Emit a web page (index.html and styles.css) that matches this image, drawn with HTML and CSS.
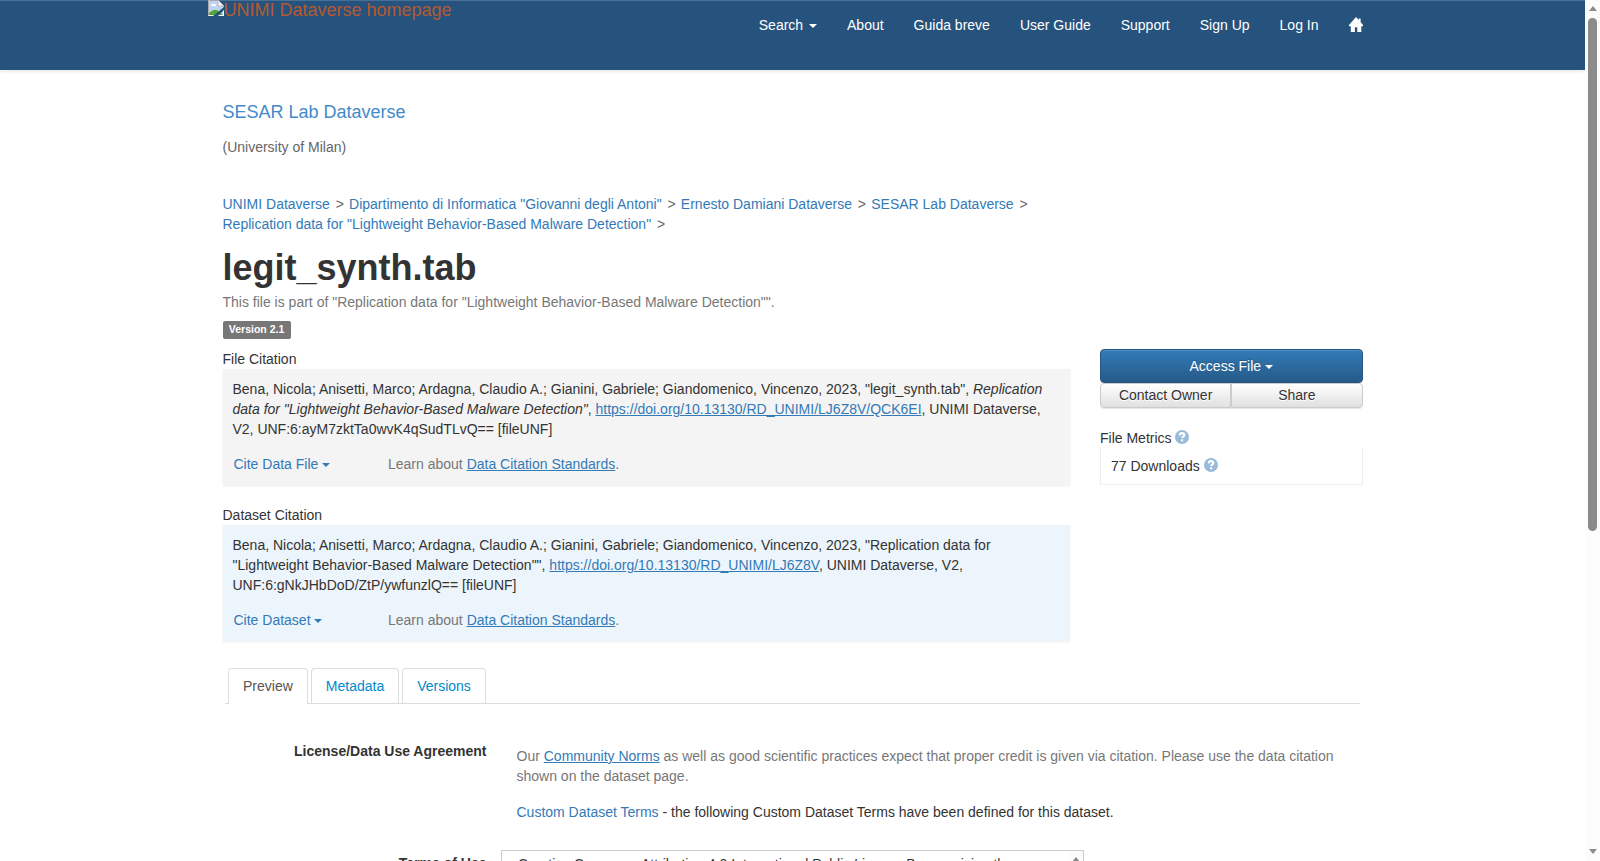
FILE: index.html
```
<!DOCTYPE html>
<html lang="en">
<head>
  <meta charset="UTF-8">
  <title>legit_synth.tab - UNIMI Dataverse</title>
  <link rel="stylesheet" href="styles.css">
</head>
<body>
<div class="page">
  <!-- Navbar -->
  <nav class="navbar">
    <div class="container navbar-inner">
      <a class="brand"><svg width="16" height="16" viewBox="0 0 16 16"><path d="M0 0h10l6 6v10H0z" fill="#fff"/><path d="M1 1h9v5h5v9H1z" fill="#c1d3f5"/><path d="M3 6a2 2 0 0 1 2-2 2 2 0 0 1 3 2z" fill="#fff"/><path d="M1 15v-2q4-4 8-3l6 5z" fill="#53a737"/><path d="M.5 15.5V.5H10l5.500 5.500v3" fill="none" stroke="#aaa"/><path d="M10 0v6h6z" fill="#f5f5f5" stroke="#aaa" stroke-width=".7"/><path d="M5 16L16 7v3l-6 6z" fill="#26527e"/></svg><span>UNIMI Dataverse homepage</span></a>
      <ul class="nav">
        <li><a>Search <b class="caret"></b></a></li>
        <li><a>About</a></li>
        <li><a>Guida breve</a></li>
        <li><a>User Guide</a></li>
        <li><a>Support</a></li>
        <li><a>Sign Up</a></li>
        <li><a>Log In</a></li>
        <li><a class="home"><svg width="14" height="15" viewBox="0 0 14 15"><path d="M7 0l2.800 3V1.600h1.800V5L14 8v1.200h-1.700V15H8.300v-4.800H5.900V15H1.800V9.200H0V8z" fill="#fff"/></svg></a></li>
      </ul>
    </div>
  </nav>

  <div class="container content">
    <div class="dataverse-name"><a>SESAR Lab Dataverse</a></div>
    <div class="affiliation">(University of Milan)</div>

    <!-- Breadcrumbs -->
    <div class="breadcrumbs">
      <a>UNIMI Dataverse</a><i>&gt;</i><a>Dipartimento di Informatica "Giovanni degli Antoni"</a><i>&gt;</i><a>Ernesto Damiani Dataverse</a><i>&gt;</i><a>SESAR Lab Dataverse</a><i>&gt;</i><br>
      <a>Replication data for "Lightweight Behavior-Based Malware Detection"</a><i>&gt;</i>
    </div>

    <h1>legit_synth.tab</h1>
    <div class="text-muted">This file is part of "Replication data for "Lightweight Behavior-Based Malware Detection"".</div>
    <div class="label-row"><span class="label">Version 2.1</span></div>

    <div class="row">
      <!-- Citations -->
      <div class="citations">
        <div>File Citation</div>
        <div class="citation file">
          <div>Bena, Nicola; Anisetti, Marco; Ardagna, Claudio A.; Gianini, Gabriele; Giandomenico, Vincenzo, 2023, "legit_synth.tab", <em>Replication data for "Lightweight Behavior-Based Malware Detection"</em>, <a class="underline">https://doi.org/10.13130/RD_UNIMI/LJ6Z8V/QCK6EI</a>, UNIMI Dataverse, V2, UNF:6:ayM7zktTa0wvK4qSudTLvQ== [fileUNF]</div>
          <div class="citation-actions">
            <a class="cite">Cite Data File <b class="caret"></b></a>
            <span class="text-muted">Learn about <a class="underline">Data Citation Standards</a>.</span>
          </div>
        </div>
        <div>Dataset Citation</div>
        <div class="citation dataset">
          <div>Bena, Nicola; Anisetti, Marco; Ardagna, Claudio A.; Gianini, Gabriele; Giandomenico, Vincenzo, 2023, "Replication data for "Lightweight Behavior-Based Malware Detection"", <a class="underline">https://doi.org/10.13130/RD_UNIMI/LJ6Z8V</a>, UNIMI Dataverse, V2, UNF:6:gNkJHbDoD/ZtP/ywfunzlQ== [fileUNF]</div>
          <div class="citation-actions">
            <a class="cite">Cite Dataset <b class="caret"></b></a>
            <span class="text-muted">Learn about <a class="underline">Data Citation Standards</a>.</span>
          </div>
        </div>
      </div>

      <!-- Access and metrics -->
      <div class="actions">
        <div class="btn-access">Access File <b class="caret"></b></div>
        <div class="btn-group"><div class="btn">Contact Owner</div><div class="btn">Share</div></div>
        <div class="metrics-title">File Metrics <span class="help"><svg width="14" height="14" viewBox="0 0 14 14"><circle cx="7" cy="7" r="7"/><path d="M4.700 5.400Q4.800 3.200 7 3.200t2.300 1.900q0 1-1.100 1.600-1 .5-1 1.300"/><path d="M7.100 9.300v2"/></svg></span></div>
        <div class="metrics-body">77 Downloads <span class="help"><svg width="14" height="14" viewBox="0 0 14 14"><circle cx="7" cy="7" r="7"/><path d="M4.700 5.400Q4.800 3.200 7 3.200t2.300 1.900q0 1-1.100 1.600-1 .5-1 1.300"/><path d="M7.100 9.300v2"/></svg></span></div>
      </div>
    </div>

    <!-- Tabs -->
    <div class="tabs">
      <div class="tab active">Preview</div>
      <div class="tab">Metadata</div>
      <div class="tab">Versions</div>
    </div>

    <!-- Terms -->
    <div class="form-row">
      <div class="form-label">License/Data Use Agreement</div>
      <div class="form-value">
        <p class="text-muted">Our <a class="underline">Community Norms</a> as well as good scientific practices expect that proper credit is given via citation. Please use the data citation shown on the dataset page.</p>
        <p><a>Custom Dataset Terms</a> - the following Custom Dataset Terms have been defined for this dataset.</p>
      </div>
    </div>
    <div class="form-row">
      <div class="form-label terms-label">Terms of Use</div>
      <div class="terms-box">
        <div class="terms-text">Creative Commons Attribution 4.0 International Public License By exercising the</div>
        <div class="scrollbar"><span class="arrow-up"></span></div>
      </div>
    </div>
  </div>
</div>
<div class="scrollbar">
  <span class="arrow-up"></span>
  <span class="thumb"></span>
  <span class="arrow-down"></span>
</div>
</body>
</html>
```
FILE: styles.css
```
* {
    box-sizing: border-box;
}
body {
    margin: 0;
    display: flex;
    height: 861px;
    overflow: hidden;
    font-family: "Liberation Sans", Arial, sans-serif;
    font-size: 14px;
    line-height: 20px;
    color: #333;
    background: #fff;
}
a {
    color: #337ab7;
}
.underline {
    text-decoration: underline;
}
.text-muted {
    color: #777;
}
.page {
    flex: 1;
    height: 861px;
    overflow: hidden;
}
.container {
    width: 1170px;
    margin: 0 auto;
}
.caret {
    display: inline-block;
    vertical-align: middle;
    border-top: 4px solid;
    border-left: 4px solid transparent;
    border-right: 4px solid transparent;
}

/* navbar */
.navbar {
    height: 70px;
    background: #26527e;
    border-top: 1px solid #4a6f94;
    box-shadow: 0 1px 4px rgba(0,0,0,0.12);
}
.navbar-inner {
    display: flex;
    justify-content: space-between;
}
.brand {
    display: flex;
    height: 20px;
    margin-top: -1px;
    font-size: 18px;
    color: #c55b28;
}
.brand span {
    opacity: 0.9;
}
.nav {
    display: flex;
    margin: 0;
    padding: 0;
    list-style: none;
}
.nav a {
    display: block;
    padding: 14px 15px;
    color: #fff;
}
.nav .caret {
    margin-left: 2px;
}
.nav .home svg {
    display: block;
    margin-top: 2px;
}

/* header */
.content {
    padding: 32px 15px 0;
}
.dataverse-name {
    font-size: 18px;
}
.dataverse-name a {
    color: #428bca;
}
.affiliation {
    margin-top: 15px;
    color: #666;
}
.breadcrumbs {
    margin-top: 37px;
}
.breadcrumbs i {
    margin: 0 5.2px 0 5.8px;
    font-style: normal;
    color: #666;
}
h1 {
    margin: 14px 0 4px;
    font-size: 36px;
    line-height: 40px;
}
.label-row {
    display: flex;
    margin: 9px 0 10px;
}
.label {
    height: 18px;
    padding: 0 6.3px;
    border-radius: 2px;
    background: #777;
    color: #fff;
    font-size: 10.5px;
    font-weight: bold;
    line-height: 17px;
}

/* citations */
.row {
    display: flex;
    gap: 30px;
}
.citations {
    width: 847.5px;
}
.citation {
    height: 116px;
    margin-bottom: 20px;
    padding: 10px;
    box-shadow: 0 1px 2px rgba(0,0,0,0.08);
}
.citation.file {
    background: #f4f4f4;
}
.citation.dataset {
    background: #ecf5fc;
}
.citation-actions {
    display: flex;
    margin-top: 15px;
}
.cite {
    width: 155.5px;
    padding-left: 1px;
}

/* right column */
.actions {
    flex: 1;
}
.btn-access {
    height: 34px;
    padding: 6px 0;
    border: 1px solid #245580;
    border-radius: 4px;
    background: linear-gradient(#337ab7, #265a88);
    box-shadow: inset 0 1px 0 rgba(255,255,255,0.15), 0 1px 1px rgba(0,0,0,0.08);
    color: #fff;
    text-align: center;
    text-shadow: 0 -1px 0 rgba(0,0,0,0.2);
}
.btn-group {
    display: flex;
    margin-bottom: 20px;
}
.btn {
    flex: 1;
    height: 25px;
    padding-top: 1px;
    border: 1px solid #ccc;
    border-radius: 4px 0 0 4px;
    background: linear-gradient(#fff, #e0e0e0);
    box-shadow: 0 1px 1px rgba(0,0,0,0.1);
    text-align: center;
    text-shadow: 0 1px 0 #fff;
}
.btn + .btn {
    border-radius: 0 4px 4px 0;
}
.metrics-body {
    height: 37px;
    padding: 8px 10px;
    border: 1px solid #eee;
    border-top: 0;
}
.help svg {
    vertical-align: -1px;
    opacity: 0.5;
}
.help circle {
    fill: #337ab7;
}
.help path {
    fill: none;
    stroke: #fff;
    stroke-width: 2.2;
}

/* tabs */
.tabs {
    display: flex;
    gap: 3px;
    height: 36px;
    margin: 7px 2.5px 37px;
    padding-left: 3px;
    border-bottom: 1px solid #ddd;
}
.tab {
    height: 35px;
    padding: 7px 14px;
    border: 1px solid #ddd;
    border-bottom: 0;
    border-radius: 4px 4px 0 0;
    color: #0088cc;
}
.tab.active {
    height: 36px;
    background: #fff;
    color: #555;
}

/* terms */
.form-row {
    display: flex;
}
.form-label {
    width: 264px;
    font-weight: bold;
    text-align: right;
}
.terms-label {
    padding-top: 3px;
}
.form-value {
    flex: 1;
    padding: 5px 14px 0 30px;
}
.form-value p {
    margin: 0 0 16px;
}
.form-value p + p {
    margin-bottom: 28px;
}
.terms-box {
    display: flex;
    justify-content: space-between;
    width: 583px;
    height: 150px;
    margin-left: 14.5px;
    border: 1px solid #ccc;
}
.terms-text {
    padding: 3px 16px;
}

/* scrollbars */
.scrollbar {
    display: flex;
    flex-direction: column;
    align-items: center;
    width: 15px;
    background: #fcfcfc;
}
.arrow-up {
    margin-top: 6px;
    border: 4.5px solid transparent;
    border-top: 0;
    border-bottom: 5px solid #8b8b8b;
}
.arrow-down {
    margin: auto 0 7px;
    border: 4.5px solid transparent;
    border-bottom: 0;
    border-top: 5px solid #8b8b8b;
}
.thumb {
    width: 9px;
    height: 513px;
    margin-top: 7px;
    border-radius: 5px;
    background: #8b8b8b;
}
```
